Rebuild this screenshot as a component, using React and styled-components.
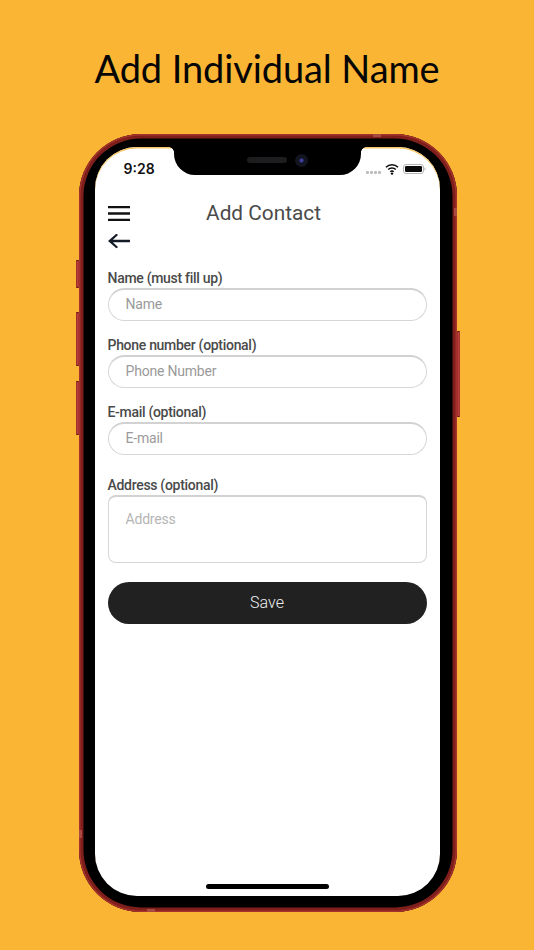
import styled, { createGlobalStyle } from "styled-components";

const GlobalStyle = createGlobalStyle`
  html, body {
    margin: 0;
    padding: 0;
    background: #fbb534;
  }
  * {
    box-sizing: border-box;
  }
`;

const Page = styled.div`
  width: 534px;
  height: 950px;
  overflow: hidden;
  display: flex;
  flex-direction: column;
  align-items: center;
  background: #fbb534;
  font-family: Roboto, "Liberation Sans", sans-serif;
`;

const Headline = styled.h1`
  margin: 0;
  height: 134px;
  padding-top: 42px;
  font-family: Lato, "Open Sans", sans-serif;
  font-weight: 400;
  font-size: 38px;
  line-height: 52px;
  letter-spacing: -0.1px;
  color: #060606;
  white-space: nowrap;
`;

const Phone = styled.div`
  position: relative;
  width: 378px;
  height: 778px;
  margin-left: 1px;
  flex: none;
  padding: 13px 17px 16px 16px;
  border-radius: 62px;
  background: #000;
  box-shadow: inset 0 0 0 1.5px #a5332c, inset 0 0 0 4.5px #7f1f1c;
`;

const SideButton = styled.span`
  position: absolute;
  top: ${(p) => p.$top}px;
  ${(p) => (p.$right ? "right: -3px;" : "left: -3px;")}
  width: 3px;
  height: ${(p) => p.$height}px;
  background: linear-gradient(90deg, #8f2522, #c4453f 60%, #8f2522);
  border-top: 1px solid #5e1210;
  border-bottom: 1px solid #5e1210;
  border-radius: 1px;
`;

const Band = styled.span`
  position: absolute;
  background: #a84a42;
  ${(p) => p.$pos}
`;

const Screen = styled.div`
  position: relative;
  height: 100%;
  overflow: hidden;
  display: flex;
  flex-direction: column;
  padding: 0 13px 7px;
  background: #fff;
  border-radius: 42px;
  box-shadow: inset 0 1.5px 0 #f8c867;
`;

const Notch = styled.div`
  position: absolute;
  top: 0;
  left: 79px;
  width: 187px;
  height: 28px;
  background: #000;
  border-radius: 0 0 21px 21px;

  &::before,
  &::after {
    content: "";
    position: absolute;
    top: 0;
    width: 5px;
    height: 5px;
  }
  &::before {
    left: -5px;
    background: radial-gradient(circle at 0 100%, transparent 4.5px, #000 5px);
  }
  &::after {
    right: -5px;
    background: radial-gradient(circle at 100% 100%, transparent 4.5px, #000 5px);
  }
`;

const Speaker = styled.span`
  position: absolute;
  top: 10px;
  left: 73px;
  width: 40px;
  height: 6px;
  border-radius: 3px;
  background: #1d1d1f;
`;

const Camera = styled.span`
  position: absolute;
  top: 7px;
  left: 121px;
  width: 13px;
  height: 13px;
  border-radius: 50%;
  background: radial-gradient(circle, #3c3fa0 0 1.5px, #12141f 2.5px);
`;

const StatusBar = styled.div`
  height: 45px;
  flex: none;
  display: flex;
  justify-content: space-between;
  align-items: flex-start;
  padding: 14px 1px 0 16px;
`;

const Time = styled.span`
  font-family: Inter, "Liberation Sans", sans-serif;
  font-size: 14px;
  line-height: 15px;
  font-weight: 600;
  color: #111;
`;

const StatusIcons = styled.div`
  display: flex;
  align-items: flex-start;
  gap: 4px;
  margin-top: 2px;
`;

const SignalDots = styled.div`
  display: flex;
  gap: 1px;
  margin-top: 8px;
`;

const SignalDot = styled.span`
  width: 3px;
  height: 3px;
  border-radius: 1px;
  background: #bdbdbd;
`;

const BatteryIcon = styled.svg`
  display: block;
  margin-top: 1px;
`;

const Header = styled.div`
  display: flex;
  align-items: center;
  height: 42px;
  flex: none;
`;

const HeaderTitle = styled.div`
  flex: 1;
  padding-right: 29px;
  text-align: center;
  font-size: 20.8px;
  line-height: 30px;
  color: #4a4a4a;
`;

const MenuIcon = styled.svg`
  display: block;
  flex: none;
`;

const BackIcon = styled.svg`
  display: block;
  flex: none;
`;

const Form = styled.div`
  display: flex;
  flex-direction: column;
  margin-top: 21px;
  width: 319px;
`;

const Group = styled.div`
  display: flex;
  flex-direction: column;
  margin-bottom: ${(p) => p.$gap}px;
`;

const Label = styled.div`
  height: 18px;
  font-size: 14px;
  line-height: 16px;
  font-weight: 500;
  letter-spacing: -0.3px;
  color: #4a4a4a;
`;

const Field = styled.div`
  height: ${(p) => (p.$area ? 68 : 33)}px;
  padding: ${(p) => (p.$area ? "14px 17px 0" : "0 17px 2px")};
  display: flex;
  align-items: ${(p) => (p.$area ? "flex-start" : "center")};
  font-size: 14px;
  line-height: 17px;
  letter-spacing: -0.2px;
  color: ${(p) => (p.$area ? "#b5b5b5" : "#9a9a9a")};
  background: #fff;
  border: 1px solid #d6d6d6;
  border-top: 2px solid #d2d2d2;
  border-radius: ${(p) => (p.$area ? "8px" : "17px")};
`;

const SaveButton = styled.button`
  height: 42px;
  padding: 0 0 2px;
  border: 0;
  border-radius: 21px;
  background: #212121;
  color: #eee;
  font-family: Roboto, "Liberation Sans", sans-serif;
  font-size: 16px;
  font-weight: 300;
`;

const HomeBar = styled.div`
  width: 123px;
  height: 5px;
  flex: none;
  margin: auto auto 0;
  border-radius: 3px;
  background: #000;
`;

function App() {
  return (
    <Page>
      <GlobalStyle />
      <Headline>Add Individual Name</Headline>
      <Phone>
        <SideButton $top={126} $height={28} />
        <SideButton $top={178} $height={54} />
        <SideButton $top={247} $height={54} />
        <SideButton $right $top={197} $height={86} />
        <Band $pos="top: 0; left: 294px; width: 8px; height: 3px;" />
        <Band $pos="bottom: 0; left: 68px; width: 8px; height: 3px;" />
        <Band $pos="top: 74px; right: 0; width: 3px; height: 8px;" />
        <Band $pos="bottom: 74px; left: 0; width: 3px; height: 8px;" />
        <Screen>
          <Notch>
            <Speaker />
            <Camera />
          </Notch>
          <StatusBar>
            <Time>9:28</Time>
            <StatusIcons>
              <SignalDots>
                <SignalDot />
                <SignalDot />
                <SignalDot />
                <SignalDot />
              </SignalDots>
              <svg width="14" height="12" viewBox="0 0 14 12">
                <path d="M1 4.2a8.6 8.6 0 0 1 12 0" fill="none" stroke="#0a0a0a" strokeWidth="1.6" />
                <path d="M3.2 6.5a5.4 5.4 0 0 1 7.6 0" fill="none" stroke="#0a0a0a" strokeWidth="1.6" />
                <path d="M5.3 8.7a2.4 2.4 0 0 1 3.4 0" fill="none" stroke="#0a0a0a" strokeWidth="1.6" />
                <circle cx="7" cy="10.6" r="1.2" fill="#0a0a0a" />
              </svg>
              <BatteryIcon width="23" height="10" viewBox="0 0 23 10">
                <rect x="0.5" y="0.5" width="20" height="9" rx="2.5" fill="#fff" stroke="#b5b5b5" />
                <rect x="2" y="2" width="17" height="6" rx="1.2" fill="#0a0a0a" />
                <path d="M21.5 3.5c.8.3 1.2.8 1.2 1.5s-.4 1.2-1.2 1.5z" fill="#b5b5b5" />
              </BatteryIcon>
            </StatusIcons>
          </StatusBar>
          <Header>
            <MenuIcon width="22" height="15" viewBox="0 0 22 15">
              <path d="M0 1.2h22M0 7.5h22M0 13.8h22" stroke="#111" strokeWidth="2.3" />
            </MenuIcon>
            <HeaderTitle>Add Contact</HeaderTitle>
          </Header>
          <BackIcon width="22" height="15" viewBox="0 0 22 15">
            <path d="M21.5 7H1.8M8.5 1 1.8 7l6.7 6" fill="none" stroke="#141a26" strokeWidth="2.3" strokeLinecap="round" />
          </BackIcon>
          <Form>
            <Group $gap={16}>
              <Label>Name (must fill up)</Label>
              <Field>Name</Field>
            </Group>
            <Group $gap={16}>
              <Label>Phone number (optional)</Label>
              <Field>Phone Number</Field>
            </Group>
            <Group $gap={22}>
              <Label>E-mail (optional)</Label>
              <Field>E-mail</Field>
            </Group>
            <Group $gap={19}>
              <Label>Address (optional)</Label>
              <Field $area>Address</Field>
            </Group>
            <SaveButton>Save</SaveButton>
          </Form>
          <HomeBar />
        </Screen>
      </Phone>
    </Page>
  );
}

export default App;
